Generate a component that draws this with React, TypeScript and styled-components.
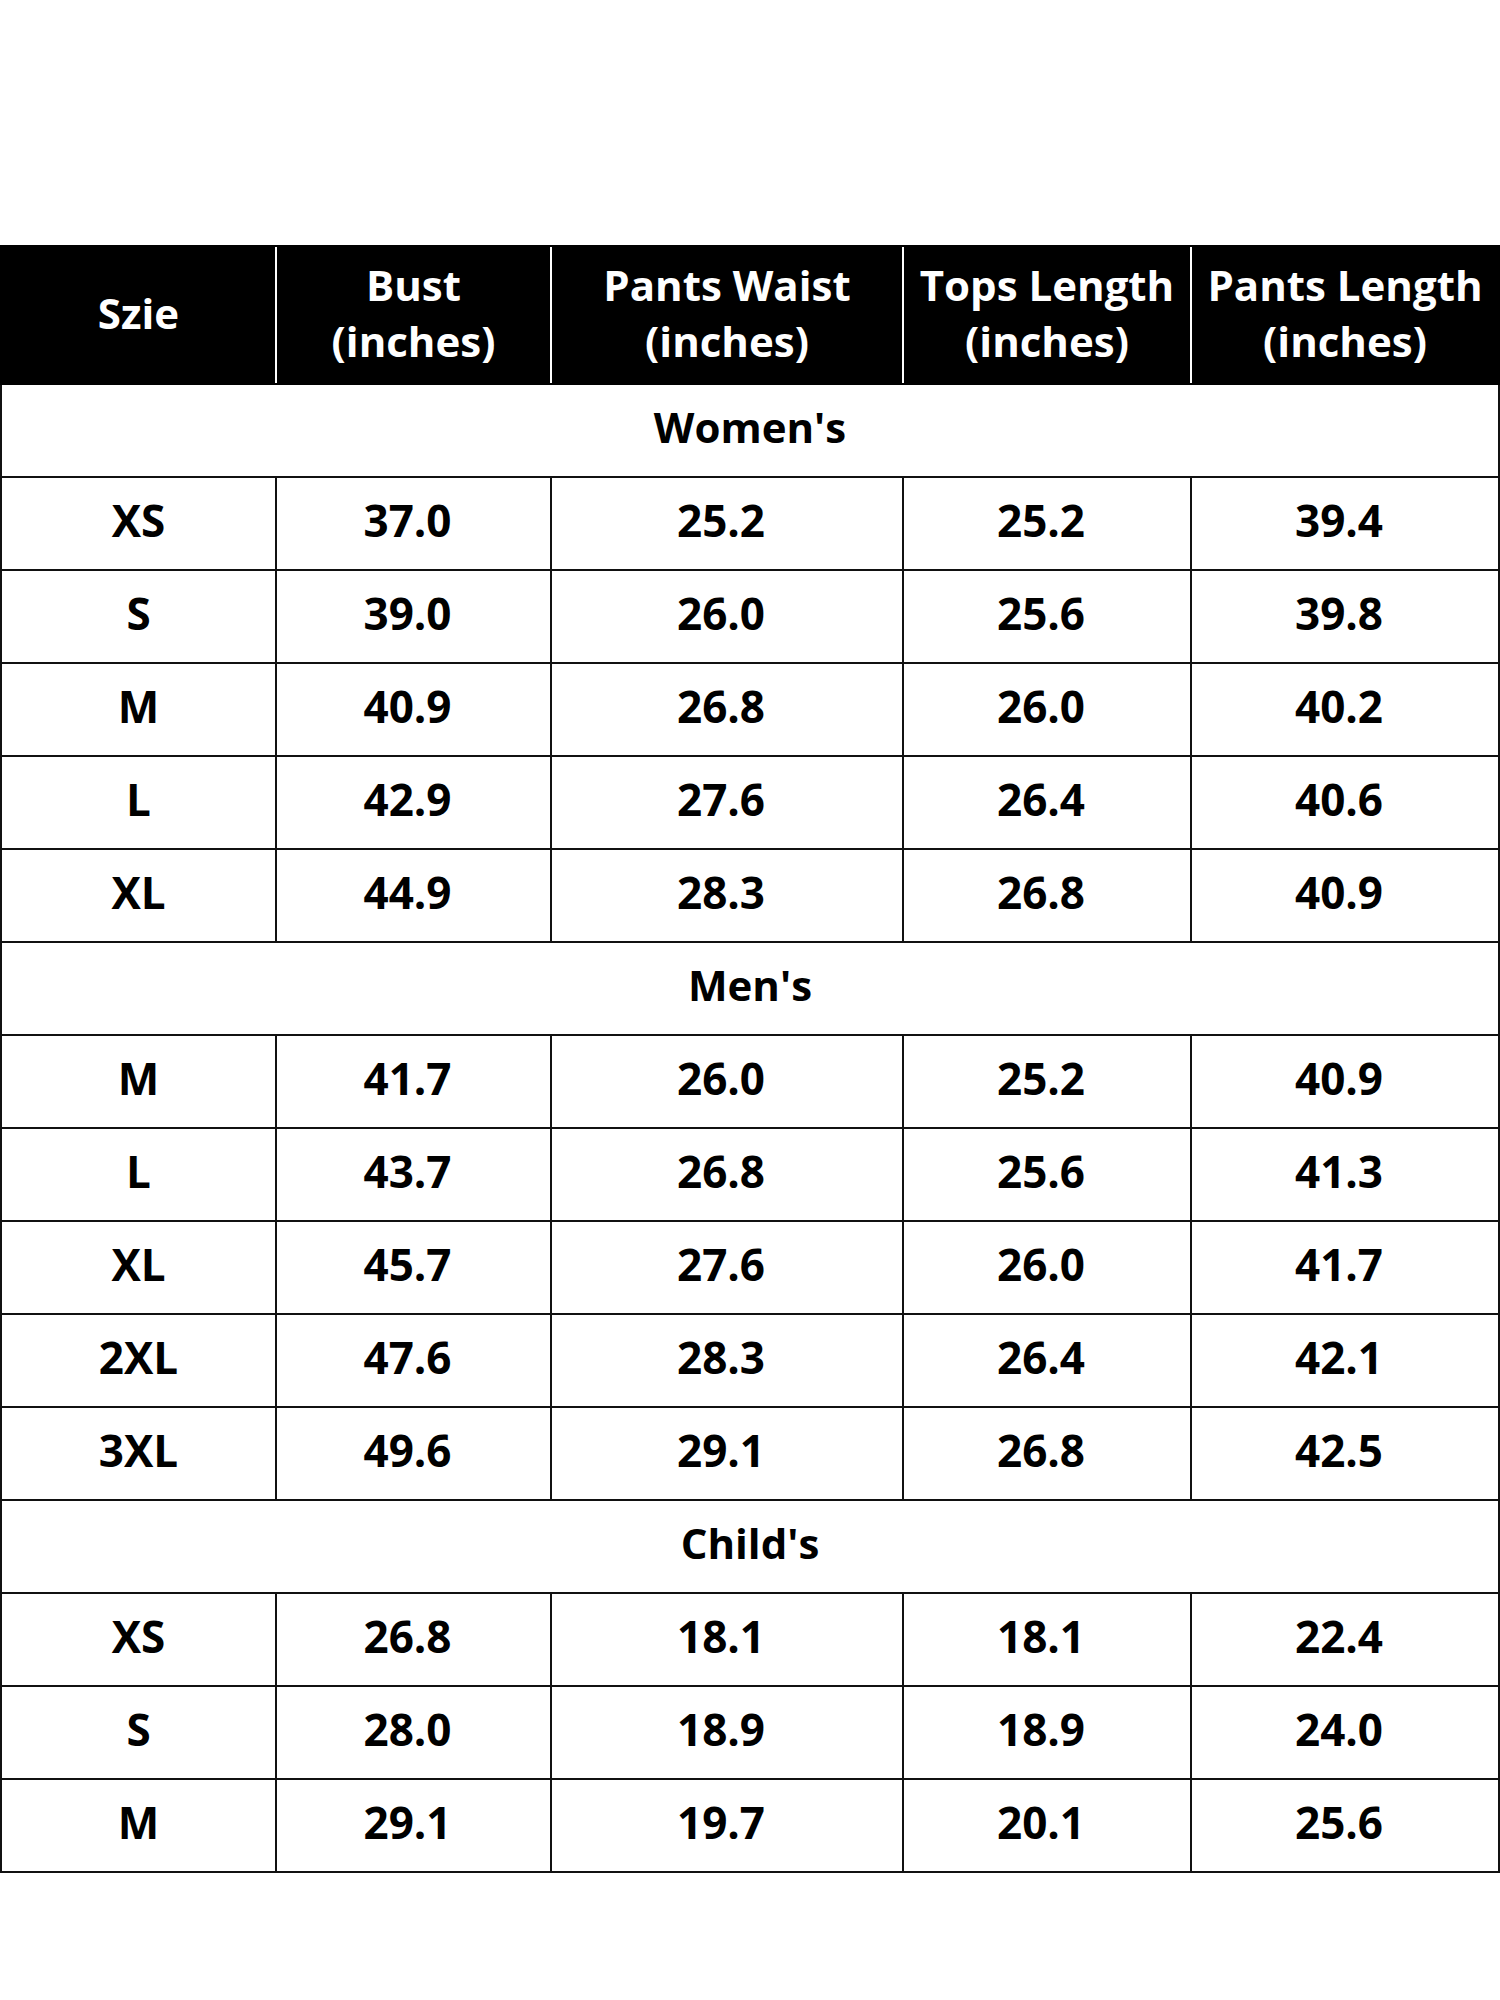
import * as React from "react";
import styled, { createGlobalStyle } from "styled-components";

const Global = createGlobalStyle`
  html, body {
    margin: 0;
    padding: 0;
    background: #ffffff;
  }
`;

const S = {
  Page: styled.div`
    width: 1500px;
    height: 2000px;
    padding-top: 245px;
    box-sizing: border-box;
    background: #fff;
    font-family: "Open Sans", "DejaVu Sans", sans-serif;
  `,
  Table: styled.table`
    width: 1498px;
    border-collapse: collapse;
    table-layout: fixed;
  `,
  HeadCell: styled.th`
    height: 131px;
    padding: 0 0 5px 0;
    background: #000;
    color: #fff;
    font-size: 42px;
    font-weight: 700;
    line-height: 56px;
    text-align: center;
    vertical-align: middle;
    border-left: 2px solid #fff;
    border-top: 2px solid #000;
    border-bottom: 2px solid #000;
    &:first-child {
      border-left: 2px solid #000;
    }
    &:last-child {
      border-right: 2px solid #000;
    }
  `,
  Cell: styled.td<{ $shift?: boolean }>`
    height: 83px;
    padding: 0 ${(p) => (p.$shift ? "12px" : "0")} 8px 0;
    border: 2px solid #111;
    color: #000;
    font-size: 44px;
    font-weight: 700;
    text-align: center;
    vertical-align: middle;
  `,
  Section: styled.td`
    height: 83px;
    padding: 0 0 8px 0;
    border: 2px solid #111;
    color: #000;
    font-size: 42px;
    font-weight: 700;
    text-align: center;
    vertical-align: middle;
  `
};

const widths = [275, 275, 352, 288, 308];

const heads = [
  ["Szie"],
  ["Bust", "(inches)"],
  ["Pants Waist", "(inches)"],
  ["Tops Length", "(inches)"],
  ["Pants Length", "(inches)"]
];

const groups: { name: string; rows: string[][] }[] = [
  {
    name: "Women's",
    rows: [
      ["XS", "37.0", "25.2", "25.2", "39.4"],
      ["S", "39.0", "26.0", "25.6", "39.8"],
      ["M", "40.9", "26.8", "26.0", "40.2"],
      ["L", "42.9", "27.6", "26.4", "40.6"],
      ["XL", "44.9", "28.3", "26.8", "40.9"]
    ]
  },
  {
    name: "Men's",
    rows: [
      ["M", "41.7", "26.0", "25.2", "40.9"],
      ["L", "43.7", "26.8", "25.6", "41.3"],
      ["XL", "45.7", "27.6", "26.0", "41.7"],
      ["2XL", "47.6", "28.3", "26.4", "42.1"],
      ["3XL", "49.6", "29.1", "26.8", "42.5"]
    ]
  },
  {
    name: "Child's",
    rows: [
      ["XS", "26.8", "18.1", "18.1", "22.4"],
      ["S", "28.0", "18.9", "18.9", "24.0"],
      ["M", "29.1", "19.7", "20.1", "25.6"]
    ]
  }
];

export default function App() {
  return (
    <>
      <Global />
      <S.Page>
        <S.Table>
          <colgroup>
            {widths.map((w, i) => (
              <col key={i} style={{ width: w }} />
            ))}
          </colgroup>
          <thead>
            <tr>
              {heads.map((h, i) => (
                <S.HeadCell key={i}>
                  {h.map((line, j) => (
                    <div key={j}>{line}</div>
                  ))}
                </S.HeadCell>
              ))}
            </tr>
          </thead>
          <tbody>
            {groups.map((g) => (
              <React.Fragment key={g.name}>
                <tr>
                  <S.Section colSpan={5}>{g.name}</S.Section>
                </tr>
                {g.rows.map((r, i) => (
                  <tr key={i}>
                    {r.map((v, j) => (
                      <S.Cell key={j} $shift={j > 0}>
                        {v}
                      </S.Cell>
                    ))}
                  </tr>
                ))}
              </React.Fragment>
            ))}
          </tbody>
        </S.Table>
      </S.Page>
    </>
  );
}
